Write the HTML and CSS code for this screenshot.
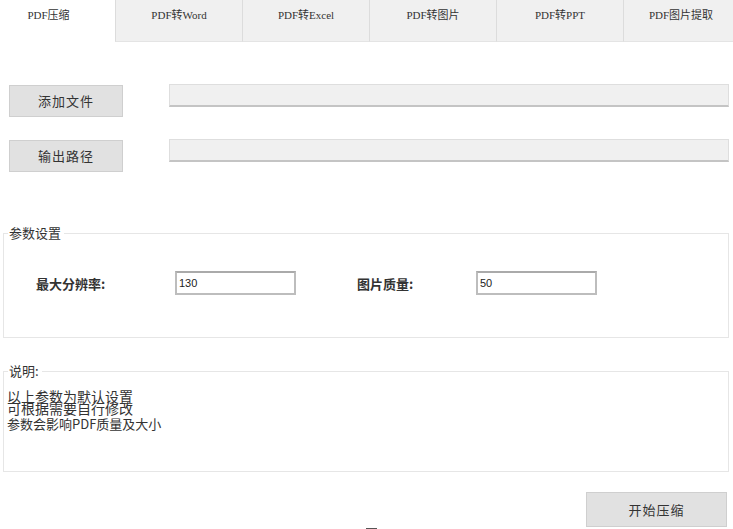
FILE: index.html
```html
<!DOCTYPE html>
<html lang="zh-CN">
<head>
    <meta charset="UTF-8">
    <title>PDF工具</title>
    <link rel="stylesheet" href="styles.css">
</head>
<body>

    <div class="tabs">
        <div class="tab active">PDF压缩</div>
        <div class="tab">PDF转Word</div>
        <div class="tab">PDF转Excel</div>
        <div class="tab">PDF转图片</div>
        <div class="tab">PDF转PPT</div>
        <div class="tab last">PDF图片提取</div>
    </div>

    <div class="page">
        <div class="file-row">
            <div class="btn">添加文件</div>
            <div class="path-box"></div>
        </div>
        <div class="file-row">
            <div class="btn">输出路径</div>
            <div class="path-box"></div>
        </div>

        <fieldset class="group params">
            <legend>参数设置</legend>
            <div class="param-row">
                <span class="param-label">最大分辨率:</span>
                <input class="num" type="text" value="130">
                <span class="param-label second">图片质量:</span>
                <input class="num" type="text" value="50">
            </div>
        </fieldset>

        <fieldset class="group notes">
            <legend>说明:</legend>
            <div class="note big">以上参数为默认设置</div>
            <div class="note big">可根据需要自行修改</div>
            <div class="note small">参数会影响PDF质量及大小</div>
        </fieldset>

        <div class="footer">
            <div class="btn start">开始压缩</div>
        </div>
        <div class="cursor-mark"></div>
    </div>

</body>
</html>
```

FILE: styles.css
```css
* {
    margin: 0;
    padding: 0;
    box-sizing: border-box;
}

body {
    width: 733px;
    height: 529px;
    overflow: hidden;
    background: #fff;
    font-family: "Liberation Serif", "Noto Sans CJK SC", serif;
    color: #222;
}

.tabs {
    display: flex;
    height: 42px;
    overflow: hidden;
}

.tab {
    flex: none;
    width: 127px;
    padding-top: 8px;
    text-align: center;
    font-size: 11px;
    line-height: 14px;
    background: #f0f0f0;
    border-left: 1px solid #dcdcdc;
    border-bottom: 1px solid #e4e4e4;
    color: #333;
}

.tab.active {
    width: 115px;
    background: #fff;
    border: none;
    padding-right: 18px;
}

.tab.last {
    width: 115px;
}

.page {
    padding: 42px 4px 0 3px;
}

.file-row {
    display: flex;
    align-items: flex-start;
    margin-bottom: 22px;
}

.btn {
    width: 114px;
    height: 32px;
    margin: 1px 0 0 6px;
    background: #e1e1e1;
    border: 1px solid #cfcfcf;
    font-family: "Noto Sans CJK SC", sans-serif;
    font-size: 13px;
    letter-spacing: 1px;
    line-height: 30px;
    text-align: center;
    color: #333;
}

.path-box {
    flex: 1;
    height: 23px;
    margin-left: 46px;
    background: #f0f0f0;
    border: 1px solid #dedede;
    border-bottom: 2px solid #c4c4c4;
}

.group {
    border: 1px solid #e6e6e6;
    border-radius: 0;
}

.group legend {
    margin-left: 4px;
    padding: 0 3px 0 1px;
    font-family: "Noto Sans CJK SC", sans-serif;
    font-size: 13px;
    line-height: 14px;
    color: #333;
}

.params {
    margin-top: 54px;
    height: 112px;
}

.param-row {
    display: flex;
    align-items: center;
    margin-top: 31px;
}

.param-label {
    width: 171px;
    padding-left: 32px;
    font-family: "Noto Sans CJK SC", sans-serif;
    font-size: 13px;
    font-weight: bold;
    color: #333;
}

.param-label.second {
    width: 119px;
    padding-left: 61px;
    box-sizing: content-box;
}

.num {
    width: 121px;
    height: 24px;
    border: 2px solid #bdbdbd;
    border-top-color: #aaa;
    padding-left: 2px;
    font-family: "Liberation Sans", sans-serif;
    font-size: 11px;
    color: #222;
    outline: none;
}

.notes {
    margin-top: 26px;
    height: 108px;
    padding-top: 12px;
}

.note {
    font-family: "Noto Sans CJK SC", sans-serif;
    font-size: 14px;
    line-height: 12px;
    padding-left: 3px;
    color: #333;
}

.note.small {
    font-size: 13px;
    margin-top: 4px;
}

.footer {
    display: flex;
    justify-content: flex-end;
    margin-top: 19px;
}

.btn.start {
    width: 141px;
    height: 35px;
    line-height: 33px;
    margin-right: 2px;
}

.cursor-mark {
    width: 11px;
    height: 2px;
    margin: 1px 0 0 363px;
    background: #555;
}
```
